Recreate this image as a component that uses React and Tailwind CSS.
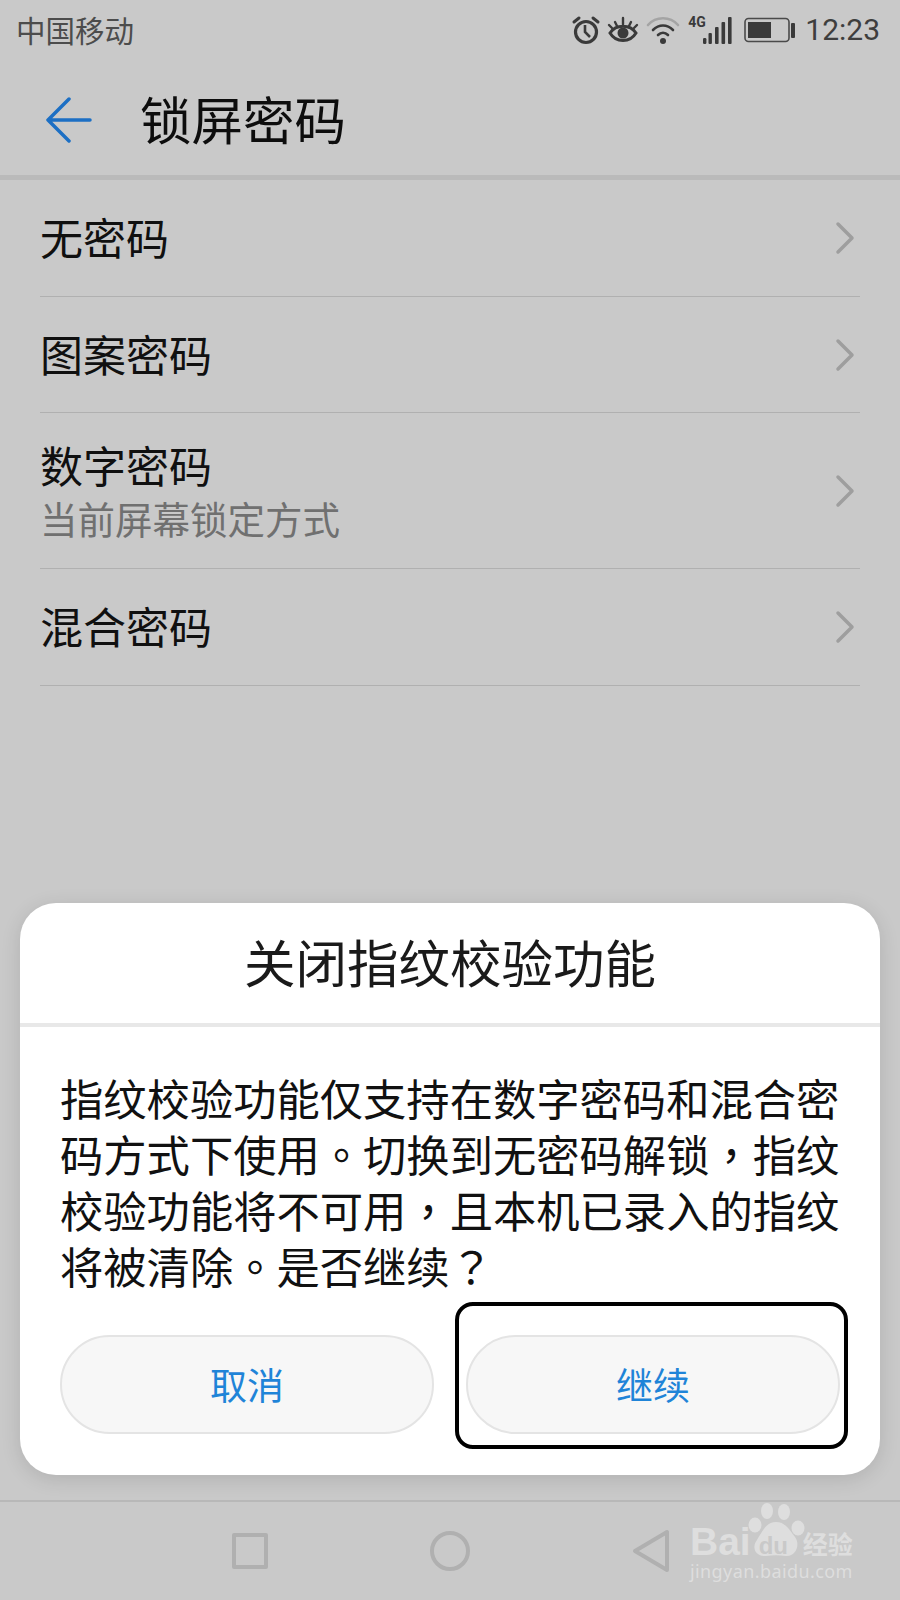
import React from "react";

const font = { fontFamily: '"Noto Sans CJK SC", "Noto Sans", sans-serif' };
const tc = { fontFamily: '"Noto Sans CJK TC", "Noto Sans CJK SC", sans-serif' };

function Chevron() {
  return (
    <svg width="20" height="34" viewBox="0 0 20 34" fill="none" className="shrink-0">
      <path d="M3 3 L17 17 L3 31" stroke="#9e9e9e" strokeWidth="3.5" strokeLinecap="round" strokeLinejoin="round" />
    </svg>
  );
}

function Row({ title, h }) {
  return (
    <div className={`${h} flex items-center justify-between border-b border-[#b0b0b0] pr-[5px]`}>
      <div className="text-[43px] leading-[56px] mb-[4px] text-[#101010]">{title}</div>
      <Chevron />
    </div>
  );
}

function Alarm() {
  return (
    <svg width="30" height="30" viewBox="0 0 30 30" fill="none" stroke="#3a3a3a">
      <circle cx="15" cy="17" r="10.5" strokeWidth="3.2" />
      <path d="M14 10 V17 L19 22" strokeWidth="2.6" />
      <path d="M3 7 L8 3 M27 7 L22 3" strokeWidth="3" strokeLinecap="round" />
    </svg>
  );
}

function Eye() {
  return (
    <svg width="32" height="30" viewBox="0 0 32 30" fill="none" stroke="#3a3a3a">
      <path d="M3 18 C9 9 23 9 29 18 C23 28 9 28 3 18 Z" strokeWidth="3" />
      <circle cx="16" cy="18" r="5.5" fill="#3a3a3a" stroke="none" />
      <path d="M16 3 V9 M8 7 L10 11 M24 7 L22 11 M2 10 L5 13 M30 10 L27 13" strokeWidth="2.4" strokeLinecap="round" />
    </svg>
  );
}

function Wifi() {
  return (
    <svg width="34" height="30" viewBox="0 0 34 30" fill="none" strokeLinecap="round">
      <path d="M2 10 C10 1 24 1 32 10" stroke="#a4a4a4" strokeWidth="2.6" />
      <path d="M7 15 C13 9 21 9 27 15" stroke="#3a3a3a" strokeWidth="2.6" />
      <path d="M12 20 C15 17 19 17 22 20" stroke="#3a3a3a" strokeWidth="2.6" />
      <circle cx="17" cy="26" r="3" fill="#3a3a3a" />
    </svg>
  );
}

function Signal() {
  return (
    <div className="relative w-[46px] h-[30px]">
      <span className="absolute left-[1px] top-0 text-[14px] leading-[14px] font-bold text-[#3a3a3a]" style={{ fontFamily: '"Roboto", sans-serif' }}>4G</span>
      <svg width="46" height="30" viewBox="0 0 46 30" fill="#3a3a3a">
        <rect x="16" y="23" width="3.4" height="6" rx="1.2" />
        <rect x="21.5" y="18" width="3.4" height="11" rx="1" />
        <rect x="28" y="12" width="3.6" height="17" rx="1" />
        <rect x="34.5" y="7" width="3.6" height="22" rx="1" />
        <rect x="41" y="2" width="3.6" height="27" rx="1" />
      </svg>
    </div>
  );
}

function Battery() {
  return (
    <svg width="54" height="26" viewBox="0 0 54 26" fill="none">
      <rect x="2" y="1.5" width="44" height="23" rx="3.5" stroke="#4a4a4a" strokeWidth="1.6" />
      <rect x="5" y="5" width="23" height="16" fill="#3a3a3a" />
      <rect x="48" y="6" width="4" height="15" rx="1" fill="#3a3a3a" />
    </svg>
  );
}

function Paw() {
  return (
    <svg width="62" height="60" viewBox="0 0 62 60" fill="#dedede">
      <ellipse cx="21" cy="9" rx="6" ry="8" />
      <ellipse cx="38" cy="10" rx="6" ry="8" />
      <ellipse cx="9" cy="23" rx="6.5" ry="7.5" />
      <ellipse cx="52" cy="26" rx="6.5" ry="7.5" />
      <path d="M30 20 C40 20 44 29 49 35 C55 43 49 55 40 54 C33 53 27 53 20 54 C10 55 5 46 11 38 C16 30 20 20 30 20 Z" />
    </svg>
  );
}

export default function App() {
  return (
    <div className="relative w-[900px] h-[1600px] overflow-hidden bg-[#c9c9c9] flex flex-col" style={font}>
      <div className="h-[60px] flex items-center justify-between pl-[16px] pr-[20px]">
        <span className="text-[29.5px] leading-[58px] text-[#4c4c4c] mb-[2px]">中国移动</span>
        <div className="flex items-center">
          <Alarm />
          <div className="ml-[6px]"><Eye /></div>
          <div className="ml-[7px]"><Wifi /></div>
          <div className="ml-[7px]"><Signal /></div>
          <div className="ml-[10px]"><Battery /></div>
          <span className="ml-[8px] text-[30px] leading-[60px] text-[#3e3e3e]" style={{ fontFamily: '"Roboto", sans-serif' }}>12:23</span>
        </div>
      </div>

      <div className="h-[120px] flex items-center border-b-[5px] border-[#bababa] pl-[46px]">
        <svg className="mt-[4px]" width="46" height="46" viewBox="0 0 46 46" fill="none" stroke="#1c6fc4" strokeWidth="3.5" strokeLinecap="round" strokeLinejoin="round">
          <path d="M23 2 L2 23 L23 44 M2 23 H44" />
        </svg>
        <span className="ml-[48px] text-[51.5px] leading-[60px] text-[#0d0d0d]">锁屏密码</span>
      </div>

      <div className="px-[40px] flex flex-col">
        <Row title="无密码" h="h-[117px]" />
        <Row title="图案密码" h="h-[116px]" />
        <div className="h-[156px] flex items-center justify-between border-b border-[#b0b0b0] pr-[5px]">
          <div className="flex flex-col mb-[3px]">
            <div className="text-[43px] leading-[52px] text-[#101010]">数字密码</div>
            <div className="mt-[6px] text-[37.5px] leading-[44px] text-[#707070]">当前屏幕锁定方式</div>
          </div>
          <Chevron />
        </div>
        <Row title="混合密码" h="h-[117px]" />
      </div>

      <div className="mt-auto h-[100px] border-t-2 border-[#b8b8b8] flex items-center">
        <div className="ml-[232px] w-[36px] h-[36px] border-[4px] border-[#b0b0b0] rounded-[2px]" />
        <div className="ml-[162px] w-[40px] h-[40px] border-[4px] border-[#b0b0b0] rounded-full" />
        <svg className="ml-[162px]" width="38" height="44" viewBox="0 0 38 44" fill="none" stroke="#b0b0b0" strokeWidth="4" strokeLinejoin="round">
          <path d="M3 22 L35 3 V41 Z" />
        </svg>
      </div>

      <div className="absolute left-[20px] top-[903px] w-[860px] h-[572px] rounded-[36px] bg-white shadow-[0_4px_20px_rgba(0,0,0,0.12)] flex flex-col">
        <div className="h-[124px] shrink-0 flex items-center justify-center text-[51.5px] leading-[60px] text-[#1a1a1a] border-b-[4px] border-[#e8e8e8]">
          <span className="mb-[4px]">关闭指纹校验功能</span>
        </div>
        <div className="pl-[40px] pr-[20px] pt-[42px] text-[43.3px] leading-[56px] text-[#111111]">
          指纹校验功能仅支持在数字密码和混合密<br />
          码方式下使用<span style={tc}>。</span>切换到无密码解锁<span style={tc}>，</span>指纹<br />
          校验功能将不可用<span style={tc}>，</span>且本机已录入的指纹<br />
          将被清除<span style={tc}>。</span>是否继续<span style={tc}>？</span>
        </div>
        <div className="mt-[42px] pl-[40px] pr-[40px] flex justify-between">
          <button className="w-[374px] h-[99px] rounded-full border-2 border-[#e4e4e4] bg-[#f7f7f7] text-[37px] text-[#1f84d8]">取消</button>
          <div className="relative">
            <button className="w-[374px] h-[99px] rounded-full border-2 border-[#e4e4e4] bg-[#f7f7f7] text-[37px] text-[#1f84d8]">继续</button>
            <div className="absolute -left-[11px] -right-[8px] -top-[33px] -bottom-[15px] border-[4px] border-black rounded-[18px]" />
          </div>
        </div>
      </div>

      <div className="absolute left-[690px] top-[1502px] w-[165px] h-[92px] text-[#dedede]">
        <div className="flex items-end h-[60px]">
          <span className="text-[39px] leading-[40px] font-bold" style={{ fontFamily: '"Liberation Sans", sans-serif' }}>Bai</span>
          <div className="relative w-[58px] h-[60px] -ml-[5px]">
            <Paw />
            <span className="absolute left-[13px] top-[31px] text-[24px] leading-[26px] font-bold text-[#c9c9c9]" style={{ fontFamily: '"Liberation Sans", sans-serif' }}>du</span>
          </div>
          <span className="-ml-[1px] text-[25px] leading-[38px] font-bold whitespace-nowrap">经验</span>
        </div>
        <div className="-mt-[3px] text-[18px] leading-[24px] tracking-[0.4px] whitespace-nowrap" style={{ fontFamily: '"Noto Sans", sans-serif' }}>jingyan.baidu.com</div>
      </div>
    </div>
  );
}
